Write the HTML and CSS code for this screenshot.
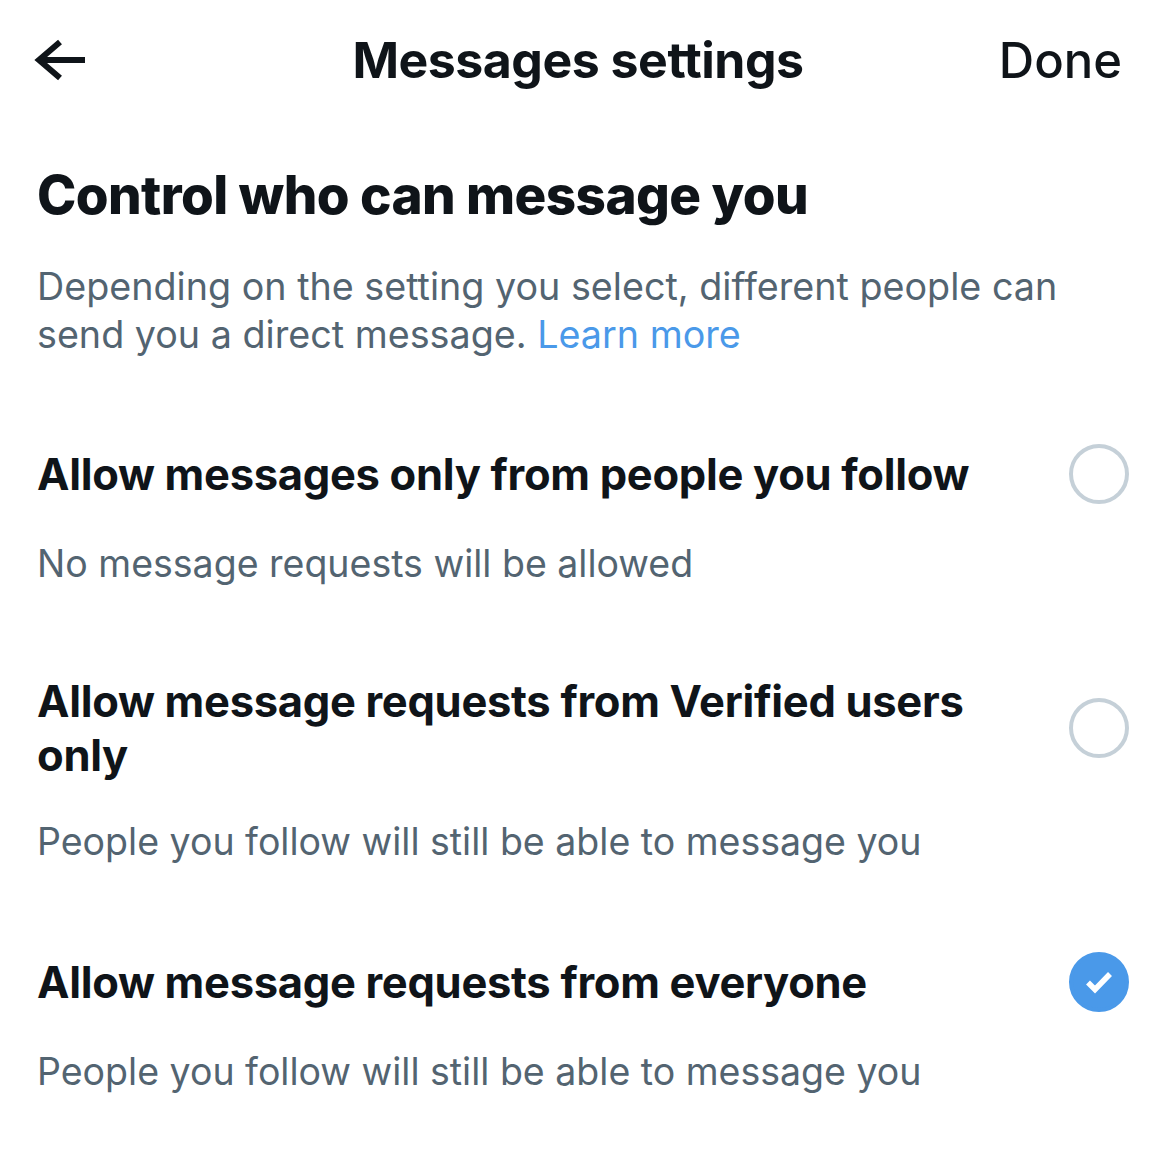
FILE: index.html
```html
<!DOCTYPE html>
<html lang="en">

<head>
    <meta charset="UTF-8">
    <meta name="viewport" content="width=device-width, initial-scale=1.0">
    <title>Messages settings</title>
    <link rel="stylesheet" href="styles.css">
</head>

<body>
    <!-- Top bar -->
    <div class="topbar">
        <a class="back" href="#">
            <svg width="54" height="44" viewBox="0 0 54 44">
                <path d="M26 4 L5 22 L26 40 M5 22 L51 22" fill="none" stroke="#0f1419" stroke-width="6" stroke-linejoin="miter"/>
            </svg>
        </a>
        <h1 class="title">Messages settings</h1>
        <a class="done" href="#">Done</a>
    </div>

    <div class="content">
        <h2>Control who can message you</h2>
        <p class="desc">Depending on the setting you select, different people can send you a direct message. <a href="#">Learn more</a></p>

        <div class="option">
            <div class="option-row">
                <h3>Allow messages only from people you follow</h3>
                <span class="radio"></span>
            </div>
            <p class="sub">No message requests will be allowed</p>
        </div>

        <div class="option">
            <div class="option-row">
                <h3>Allow message requests from Verified users only</h3>
                <span class="radio"></span>
            </div>
            <p class="sub">People you follow will still be able to message you</p>
        </div>

        <div class="option">
            <div class="option-row">
                <h3>Allow message requests from everyone</h3>
                <span class="radio checked">
                    <svg width="36" height="36" viewBox="0 0 36 36">
                        <path d="M7 18.5 L14 25.5 L29 10" fill="none" stroke="#fff" stroke-width="5.5"/>
                    </svg>
                </span>
            </div>
            <p class="sub">People you follow will still be able to message you</p>
        </div>
    </div>
</body>

</html>
```

FILE: styles.css
```css
body {
    font-family: Inter, 'Noto Sans', sans-serif;
    margin: 0;
    padding: 0;
    background: #fff;
    color: #0f1419;
}

.topbar {
    display: flex;
    align-items: center;
    justify-content: space-between;
    height: 120px;
    padding: 0 47px 0 34px;
}

.back {
    display: flex;
    width: 160px;
}

.title {
    margin: 0;
    font-size: 50px;
    font-weight: 700;
    letter-spacing: -0.5px;
}

.done {
    width: 160px;
    text-align: right;
    font-size: 49px;
    font-weight: 500;
    color: #0f1419;
    text-decoration: none;
}

.content {
    padding: 0 40px 0 37px;
}

h2 {
    margin: 40px 0 0;
    font-size: 53px;
    font-weight: 800;
    letter-spacing: -0.6px;
    line-height: 70px;
}

.desc {
    margin: 32px 0 0;
    font-size: 37.7px;
    line-height: 48px;
    color: #536471;
    font-weight: 400;
}

.desc a {
    color: #4a99e9;
    text-decoration: none;
}

.option {
    margin-top: 86px;
}

.option-row {
    display: flex;
    align-items: center;
    justify-content: space-between;
    gap: 60px;
}

h3 {
    margin: 0;
    font-size: 43.5px;
    font-weight: 700;
    line-height: 54px;
    letter-spacing: -0.3px;
}

.radio {
    flex: none;
    width: 52px;
    height: 52px;
    border: 4px solid #c5d0d8;
    border-radius: 50%;
    display: flex;
    align-items: center;
    justify-content: center;
}

.radio.checked {
    background: #4a99e9;
    border-color: #4a99e9;
}

.sub {
    margin: 36px 0 0;
    font-size: 37.5px;
    line-height: 48px;
    color: #536471;
}
```
